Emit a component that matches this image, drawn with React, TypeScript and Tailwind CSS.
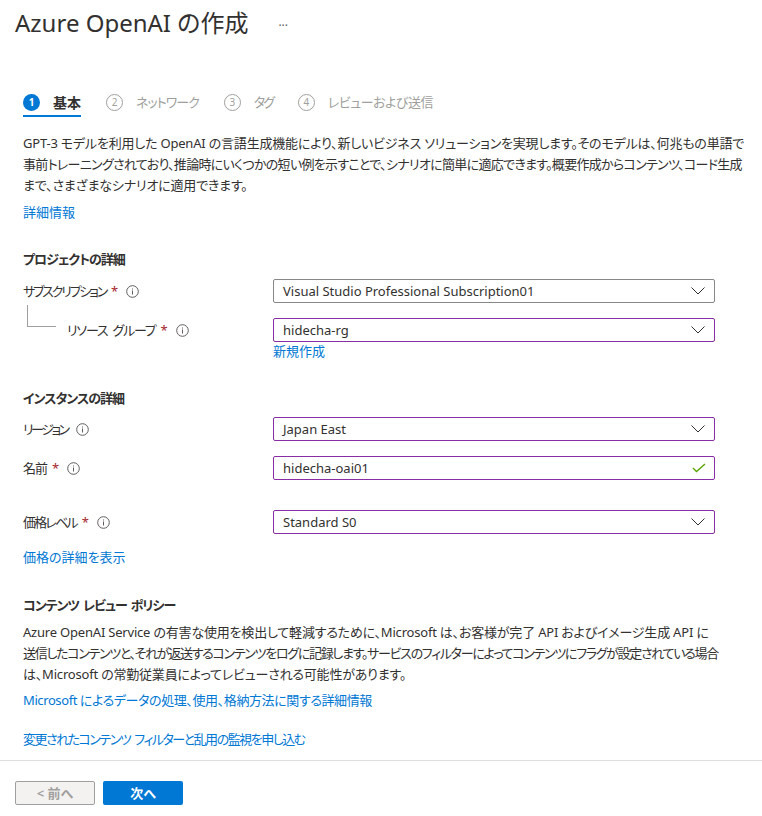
import React from 'react';

const font = { fontFamily: '"Segoe UI", "Noto Sans", "Noto Sans CJK JP", sans-serif' };

function InfoIcon() {
  return (
    <svg width="13" height="13" viewBox="0 0 13 13" className="shrink-0">
      <circle cx="6.5" cy="6.5" r="5.8" fill="none" stroke="#605e5c" strokeWidth="1" />
      <rect x="6" y="5.5" width="1" height="4" fill="#605e5c" />
      <rect x="6" y="3.5" width="1" height="1" fill="#605e5c" />
    </svg>
  );
}

function Chevron() {
  return (
    <svg width="16" height="10" viewBox="0 0 16 10" className="shrink-0">
      <polyline points="1.5,1.5 8,8 14.5,1.5" fill="none" stroke="#323130" strokeWidth="1" />
    </svg>
  );
}

function Check() {
  return (
    <svg width="14" height="10" viewBox="0 0 14 10" className="shrink-0">
      <polyline points="1,5 4.5,8.5 13,1" fill="none" stroke="#57a300" strokeWidth="1.3" />
    </svg>
  );
}

function Field({ value, dirty, check }: { value: string; dirty?: boolean; check?: boolean }) {
  return (
    <div
      className={`w-[442px] h-[24px] flex items-center justify-between pl-[9px] pr-[8px] border rounded-[2px] text-[13px] text-[#323130] ${
        dirty ? 'border-[#8a2da5]' : 'border-[#8a8886]'
      }`}
    >
      <span>{value}</span>
      {check ? <Check /> : <Chevron />}
    </div>
  );
}

function Label({ text, req, info = true, tc = 'tracking-[-1px]' }: { text: string; req?: boolean; info?: boolean; tc?: string }) {
  const parts = text.split(' ');
  return (
    <div className="flex items-center gap-[8px]">
      <span>
        {parts.map((p, i) => (
          <span key={i} className={`${tc} ${i > 0 ? 'ml-[5px]' : ''}`}>
            {p}
          </span>
        ))}
        {req && <span className="text-[#a4262c] ml-[5px]">*</span>}
      </span>
      {info && <InfoIcon />}
    </div>
  );
}

function Step({ n, label, active, tc = '' }: { n: number; label: string; active?: boolean; tc?: string }) {
  return (
    <div className="relative flex items-center gap-[13px] h-[26px]">
      {active ? (
        <span className="w-[17px] h-[17px] rounded-full bg-[#0078d4] text-white text-[10px] font-bold flex items-center justify-center">
          {n}
        </span>
      ) : (
        <span className="w-[17px] h-[17px] rounded-full border border-[#a19f9d] text-[#a19f9d] text-[10px] flex items-center justify-center">
          {n}
        </span>
      )}
      <span className={`${active ? 'font-semibold text-[#323130] text-[14px]' : 'text-[#a19f9d]'} ${tc}`}>{label}</span>
      {active && <span className="absolute left-0 right-0 -bottom-[2px] h-[2px] bg-[#0078d4]" />}
    </div>
  );
}

export default function App() {
  return (
    <div
      style={font}
      className="w-[762px] h-[816px] bg-white text-[#323130] text-[13px] leading-[21px] overflow-hidden [font-feature-settings:'palt']"
    >
      <div className="flex items-center gap-[30px] pl-[15px] pt-[7px] h-[38px]">
        <h1 className="text-[24px] leading-[30px] font-normal text-[#323130]">Azure OpenAI の作成</h1>
        <span className="text-[#605e5c] text-[12px] mt-[5px]">···</span>
      </div>

      <div className="px-[23px]">
        <div className="flex items-center gap-[25px] mt-[51px]">
          <Step n={1} label="基本" active />
          <Step n={2} label="ネットワーク" tc="tracking-[-1px]" />
          <Step n={3} label="タグ" tc="tracking-[-2px]" />
          <Step n={4} label="レビューおよび送信" tc="tracking-[-0.5px]" />
        </div>

        <p className="mt-[18px] whitespace-nowrap tracking-[-0.2px]">
          GPT-3 モデルを利用した OpenAI の言語生成機能により、新しいビジネス ソリューションを実現します。そのモデルは、何兆もの単語で
          <br />
          <span className="tracking-[-0.7px]">
            事前トレーニングされており、推論時にいくつかの短い例を示すことで、シナリオに簡単に適応できます。概要作成からコンテンツ、コード生成
          </span>
          <br />
          まで、さまざまなシナリオに適用できます。
        </p>

        <a className="block mt-[6px] text-[#0078d4]">詳細情報</a>

        <h2 className="mt-[26px] font-semibold tracking-[-1px]">プロジェクトの詳細</h2>

        <div className="flex items-center mt-[9px]">
          <div className="w-[250px]">
            <Label text="サブスクリプション" req tc="tracking-[-2.2px]" />
          </div>
          <Field value="Visual Studio Professional Subscription01" />
        </div>

        <div className="flex items-center mt-[15px]">
          <div className="w-[250px] h-[24px] flex items-center">
            <div className="self-start -mt-[13px] ml-[4px] w-[29px] h-[22px] border-l border-b border-[#a19f9d]" />
            <div className="ml-[11px]">
              <Label text="リソース グループ" req tc="tracking-[-1.2px]" />
            </div>
          </div>
          <Field value="hidecha-rg" dirty />
        </div>
        <a className="block ml-[250px] text-[#0078d4] leading-[19px]">新規作成</a>

        <h2 className="mt-[27px] font-semibold tracking-[-1px]">インスタンスの詳細</h2>

        <div className="flex items-center mt-[8px]">
          <div className="w-[250px]">
            <Label text="リージョン" tc="tracking-[-2.5px]" />
          </div>
          <Field value="Japan East" dirty />
        </div>

        <div className="flex items-center mt-[15px]">
          <div className="w-[250px]">
            <Label text="名前" req />
          </div>
          <Field value="hidecha-oai01" dirty check />
        </div>

        <div className="flex items-center mt-[30px]">
          <div className="w-[250px]">
            <Label text="価格レベル" req tc="tracking-[-1.8px]" />
          </div>
          <Field value="Standard S0" dirty />
        </div>

        <a className="block mt-[13px] text-[#0078d4]">価格の詳細を表示</a>

        <h2 className="mt-[27px] font-semibold tracking-[-1px]">
          コンテンツ<span className="ml-[4px]">レビュー</span>
          <span className="ml-[4px]">ポリシー</span>
        </h2>

        <p className="mt-[6px] whitespace-nowrap tracking-[-0.2px]">
          Azure OpenAI Service の有害な使用を検出して軽減するために、Microsoft は、お客様が完了 API およびイメージ生成 API に
          <br />
          <span className="tracking-[-1.3px]">
            送信したコンテンツと、それが返送するコンテンツをログに記録します。サービスのフィルターによってコンテンツにフラグが設定されている場合
          </span>
          <br />
          は、Microsoft の常勤従業員によってレビューされる可能性があります。
        </p>

        <a className="block mt-[5px] text-[#0078d4] tracking-[-0.4px]">Microsoft によるデータの処理、使用、格納方法に関する詳細情報</a>
        <a className="block mt-[18px] text-[#0078d4] tracking-[-1.5px]">
          変更されたコンテンツ<span className="ml-[4px]">フィルターと乱用の監視を申し込む</span>
        </a>
      </div>

      <div className="mt-[10px] border-t border-[#e1dfdd]" />

      <div className="flex gap-[8px] pl-[15px] mt-[20px]">
        <button className="w-[80px] h-[24px] bg-[#f3f2f1] border border-[#a19f9d] rounded-[2px] text-[#a19f9d] font-semibold text-[13px] leading-none">
          &lt; 前へ
        </button>
        <button className="w-[80px] h-[24px] bg-[#0078d4] rounded-[2px] text-white font-semibold text-[13px] leading-none">
          次へ
        </button>
      </div>
    </div>
  );
}
